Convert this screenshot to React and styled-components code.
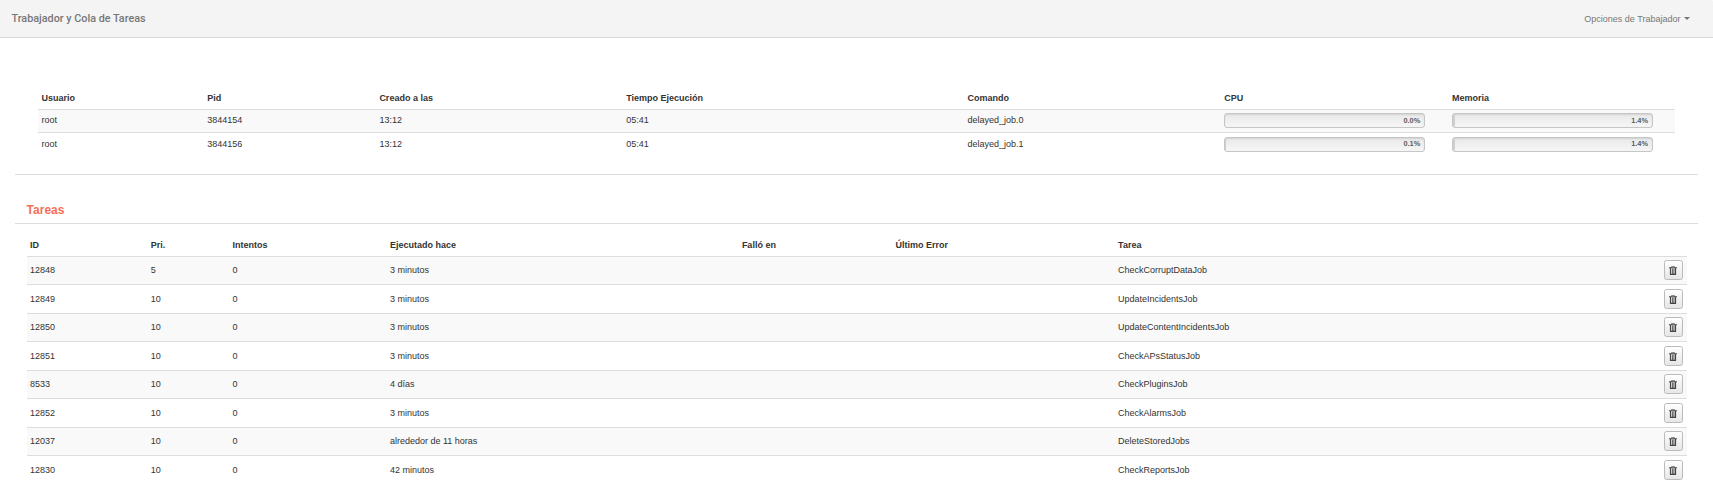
import React from "react";
import styled, { createGlobalStyle } from "styled-components";

const Global = createGlobalStyle`
  *, *::before, *::after { box-sizing: border-box; }
  body { margin: 0; background: #fff; color: #333; font: 9px/14px "Liberation Sans", Arial, sans-serif; }
`;

const Header = styled.header`
  display: flex;
  align-items: center;
  justify-content: space-between;
  height: 38px;
  padding: 0 23px 0 11.5px;
  background: #f4f4f4;
  border-bottom: 1px solid #d9d9d9;
  border-radius: 2px 2px 0 0;
`;

const Title = styled.h1`
  margin: 0;
  font: 500 10.8px/14px Roboto, sans-serif;
  color: #777;
`;

const MenuButton = styled.button`
  display: flex;
  align-items: center;
  gap: 3.6px;
  padding: 0;
  border: 0;
  background: none;
  font: inherit;
  color: #777;
`;

const Caret = styled.span`
  border: 3px solid transparent;
  border-top-color: #777;
  border-bottom: 0;
`;

const Workers = styled.section`
  margin: 0 15px;
  padding: 52px 23px 22px;
  border-bottom: 1px solid #ddd;
`;

const SectionTitle = styled.h2`
  margin: 0 15px;
  padding: 28px 12px 5px 11.6px;
  border-bottom: 1px solid #ddd;
  font-size: 12px;
  line-height: 15px;
  color: #f56f58;
`;

const Jobs = styled.section`
  padding: 10px 26px 0 27px;
`;

const Row = styled.div`
  display: grid;
  grid-template-columns: ${(p) => p.$columns};
  height: ${(p) => p.$height};
  padding-left: 3px;
  border-top: 1px solid ${(p) => (p.$head ? "transparent" : "#ddd")};
  background: ${(p) => (p.$striped ? "#f9f9f9" : "transparent")};
  font-weight: ${(p) => (p.$head ? 700 : 400)};
`;

const WorkerRow = styled(Row)`
  padding-left: 3.5px;
`;

const Cell = styled.div`
  padding-top: ${(p) => p.$top}px;
  white-space: nowrap;
`;

const Meter = styled.div`
  display: flex;
  width: 201px;
  height: 15px;
  border: 1px solid #c6c6c6;
  border-radius: 3px;
  background: linear-gradient(#e9e9e9, #f6f6f6);
  box-shadow: inset 0 1px 2px rgba(0, 0, 0, 0.1);
  overflow: hidden;
`;

const MeterFill = styled.div`
  flex: none;
  background: #cfcfcf;
`;

const MeterLabel = styled.span`
  flex: 1;
  padding-right: 4px;
  text-align: right;
  font-size: 7.35px;
  line-height: ${(p) => (p.$raised ? 11 : 13)}px;
  font-weight: 700;
  color: #5c5c5c;
`;

const DeleteButton = styled.button`
  display: flex;
  align-items: center;
  justify-content: flex-start;
  width: 19px;
  height: 20px;
  padding: 0 0 0 4px;
  border: 1px solid #bbb;
  border-radius: 2.5px;
  background: linear-gradient(#fff, #e6e6e6);
  color: #444;
`;

const workerColumns = "165.7px 172.2px 246.8px 341.4px 256.6px 227.8px 1fr";
const jobColumns = "120.8px 81.7px 157.4px 352px 153.7px 222.5px 546.3px 1fr";

const workers = [
  ["3844154", "13:12", "05:41", "delayed_job.0", 0.0, 1.4],
  ["3844156", "13:12", "05:41", "delayed_job.1", 0.1, 1.4],
];

const jobs = [
  ["12848", "5", "3 minutos", "CheckCorruptDataJob"],
  ["12849", "10", "3 minutos", "UpdateIncidentsJob"],
  ["12850", "10", "3 minutos", "UpdateContentIncidentsJob"],
  ["12851", "10", "3 minutos", "CheckAPsStatusJob"],
  ["8533", "10", "4 días", "CheckPluginsJob"],
  ["12852", "10", "3 minutos", "CheckAlarmsJob"],
  ["12037", "10", "alrededor de 11 horas", "DeleteStoredJobs"],
  ["12830", "10", "42 minutos", "CheckReportsJob"],
];

function Trash() {
  return (
    <svg width="8" height="9" viewBox="0 0 8 9" fill="none" stroke="currentColor">
      <path d="M2.5 1.5v-1h3v1" opacity="0.6" />
      <path d="M0 1.7h8" strokeWidth="1.2" opacity="0.85" />
      <path d="M1.5 2v6.4h5V2" strokeWidth="1.2" />
      <path d="M3.4 2.5V8M4.9 2.5V8" strokeWidth="1" opacity="0.85" />
    </svg>
  );
}

function Usage({ value, raised }) {
  return (
    <Meter>
      <MeterFill style={{ width: value ? Math.max(1, value * 1.4) : 0 }} />
      <MeterLabel $raised={raised}>{value.toFixed(1)}%</MeterLabel>
    </Meter>
  );
}

export default function App() {
  return (
    <>
      <Global />
      <Header>
        <Title>Trabajador y Cola de Tareas</Title>
        <MenuButton>Opciones de Trabajador <Caret /></MenuButton>
      </Header>
      <Workers>
        <WorkerRow $head $columns={workerColumns} $height="19px">
          {["Usuario", "Pid", "Creado a las", "Tiempo Ejecución", "Comando", "CPU", "Memoria"].map((name) => (
            <Cell key={name} $top={0}>{name}</Cell>
          ))}
        </WorkerRow>
        {workers.map(([pid, created, time, command, cpu, memory], i) => (
          <WorkerRow key={pid} $striped={i === 0} $columns={workerColumns} $height={i === 0 ? "23px" : "20px"}>
            {["root", pid, created, time, command].map((text, n) => (
              <Cell key={n} $top={i === 0 ? 3 : 4}>{text}</Cell>
            ))}
            <Cell $top={i === 0 ? 3 : 4}><Usage value={cpu} raised={i === 1} /></Cell>
            <Cell $top={i === 0 ? 3 : 4}><Usage value={memory} raised={i === 1} /></Cell>
          </WorkerRow>
        ))}
      </Workers>
      <SectionTitle>Tareas</SectionTitle>
      <Jobs>
        <Row $head $columns={jobColumns} $height="22px">
          {["ID", "Pri.", "Intentos", "Ejecutado hace", "Falló en", "Último Error", "Tarea"].map((name) => (
            <Cell key={name} $top={3}>{name}</Cell>
          ))}
        </Row>
        {jobs.map(([id, priority, age, job], i) => (
          <Row key={id} $striped={i % 2 === 0} $columns={jobColumns} $height={i % 2 === 0 ? "28px" : "29px"}>
            {[id, priority, "0", age, "", "", job].map((text, n) => (
              <Cell key={n} $top={i % 2 === 0 ? 6 : 7}>{text}</Cell>
            ))}
            <Cell $top={i % 2 === 0 ? 3 : 4}>
              <DeleteButton aria-label="Eliminar"><Trash /></DeleteButton>
            </Cell>
          </Row>
        ))}
      </Jobs>
    </>
  );
}
